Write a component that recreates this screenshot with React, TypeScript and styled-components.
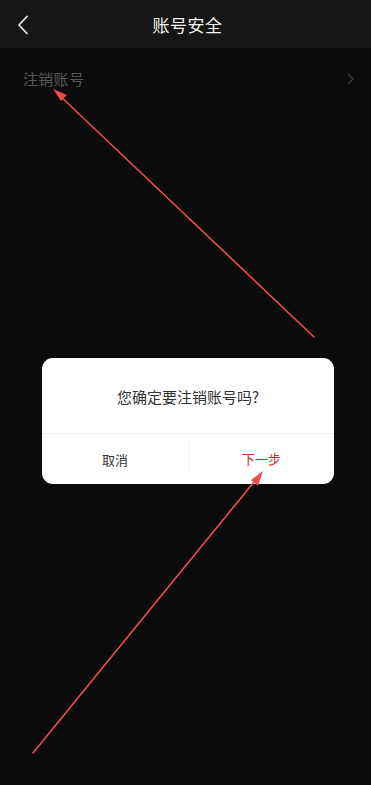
import React from 'react'
import styled, { createGlobalStyle } from 'styled-components';

const GlobalStyle = createGlobalStyle`
    html, body {
        margin: 0;
        padding: 0;
        background: #0b0b0b;
    }
    body {
        font-family: "Noto Sans CJK SC", "Noto Sans", sans-serif;
    }
`;

const App = () => {
  return (
    <>
        <GlobalStyle />
        <Screen>
            <Header>
                <Back>
                    <svg width="12" height="20" viewBox="0 0 12 20">
                        <path d="M10 1.5 L2 10 L10 18.5" fill="none" stroke="#e8e8e8" strokeWidth="1.8" strokeLinecap="round" strokeLinejoin="round" />
                    </svg>
                </Back>
                <Title>账号安全</Title>
            </Header>
            <Row>
                <RowLabel>注销账号</RowLabel>
                <svg width="7" height="12" viewBox="0 0 7 12">
                    <path d="M1 1 L6 6 L1 11" fill="none" stroke="#3a3a3a" strokeWidth="1.4" />
                </svg>
            </Row>
            <Body>
                <Dialog>
                    <Message>您确定要注销账号吗?</Message>
                    <Actions>
                        <Action>取消</Action>
                        <Action $primary>下一步</Action>
                    </Actions>
                </Dialog>
            </Body>
            <Annotations width="371" height="785" viewBox="0 0 371 785">
                <g stroke="#ec4c4f" strokeWidth="1.6" fill="#ec4c4f" strokeLinecap="round">
                    <line x1="314" y1="337" x2="58" y2="94" />
                    <polygon points="53,89 67,95 61,101" stroke="none" />
                    <line x1="33" y1="753" x2="258" y2="477" />
                    <polygon points="263,471 258,486 251,480" stroke="none" />
                </g>
            </Annotations>
        </Screen>
    </>
  )
}

export default App;

const Screen = styled.div`
    position: relative;
    width: 371px;
    height: 785px;
    background-color: #0b0b0b;
    display: flex;
    flex-direction: column;
    overflow: hidden;
`;
const Header = styled.div`
    height: 48px;
    padding-left: 4px;
    background-color: #161616;
    display: flex;
    align-items: center;
    justify-content: center;
    position: relative;
    flex-shrink: 0;
`;
const Back = styled.div`
    position: absolute;
    left: 17px;
    top: 15px;
    display: flex;
`;
const Title = styled.div`
    color: #f2f2f2;
    font-size: 17px;
    letter-spacing: 0.5px;
`;
const Row = styled.div`
    height: 62px;
    padding: 0 17px 0 23px;
    display: flex;
    align-items: center;
    justify-content: space-between;
    border-bottom: 1px solid #101010;
    flex-shrink: 0;
    box-sizing: border-box;
`;
const RowLabel = styled.div`
    color: #575757;
    font-size: 15px;
    letter-spacing: 0.3px;
`;
const Body = styled.div`
    flex: 1;
    display: flex;
    justify-content: center;
    padding: 248px 0 0 5px;
`;
const Dialog = styled.div`
    width: 292px;
    height: 126px;
    background-color: #ffffff;
    border-radius: 11px;
    display: flex;
    flex-direction: column;
    overflow: hidden;
`;
const Message = styled.div`
    height: 76px;
    display: flex;
    align-items: center;
    justify-content: center;
    color: #333333;
    font-size: 15px;
    border-bottom: 1px solid #f2f2f2;
    padding-top: 1px;
    box-sizing: border-box;
`;
const Actions = styled.div`
    flex: 1;
    display: grid;
    grid-template-columns: 146px 1fr;
`;
const Action = styled.div<{ $primary?: boolean }>`
    display: flex;
    align-items: center;
    justify-content: center;
    font-size: 13px;
    color: ${p => p.$primary ? '#c4302c' : '#333333'};
    border-left: ${p => p.$primary ? '1px solid #f4f4f4' : 'none'};
    margin: ${p => p.$primary ? '2px 0 10px' : '0'};
    padding-top: ${p => p.$primary ? '6px' : '0'};
`;
const Annotations = styled.svg`
    position: absolute;
    left: 0;
    top: 0;
    pointer-events: none;
`;
